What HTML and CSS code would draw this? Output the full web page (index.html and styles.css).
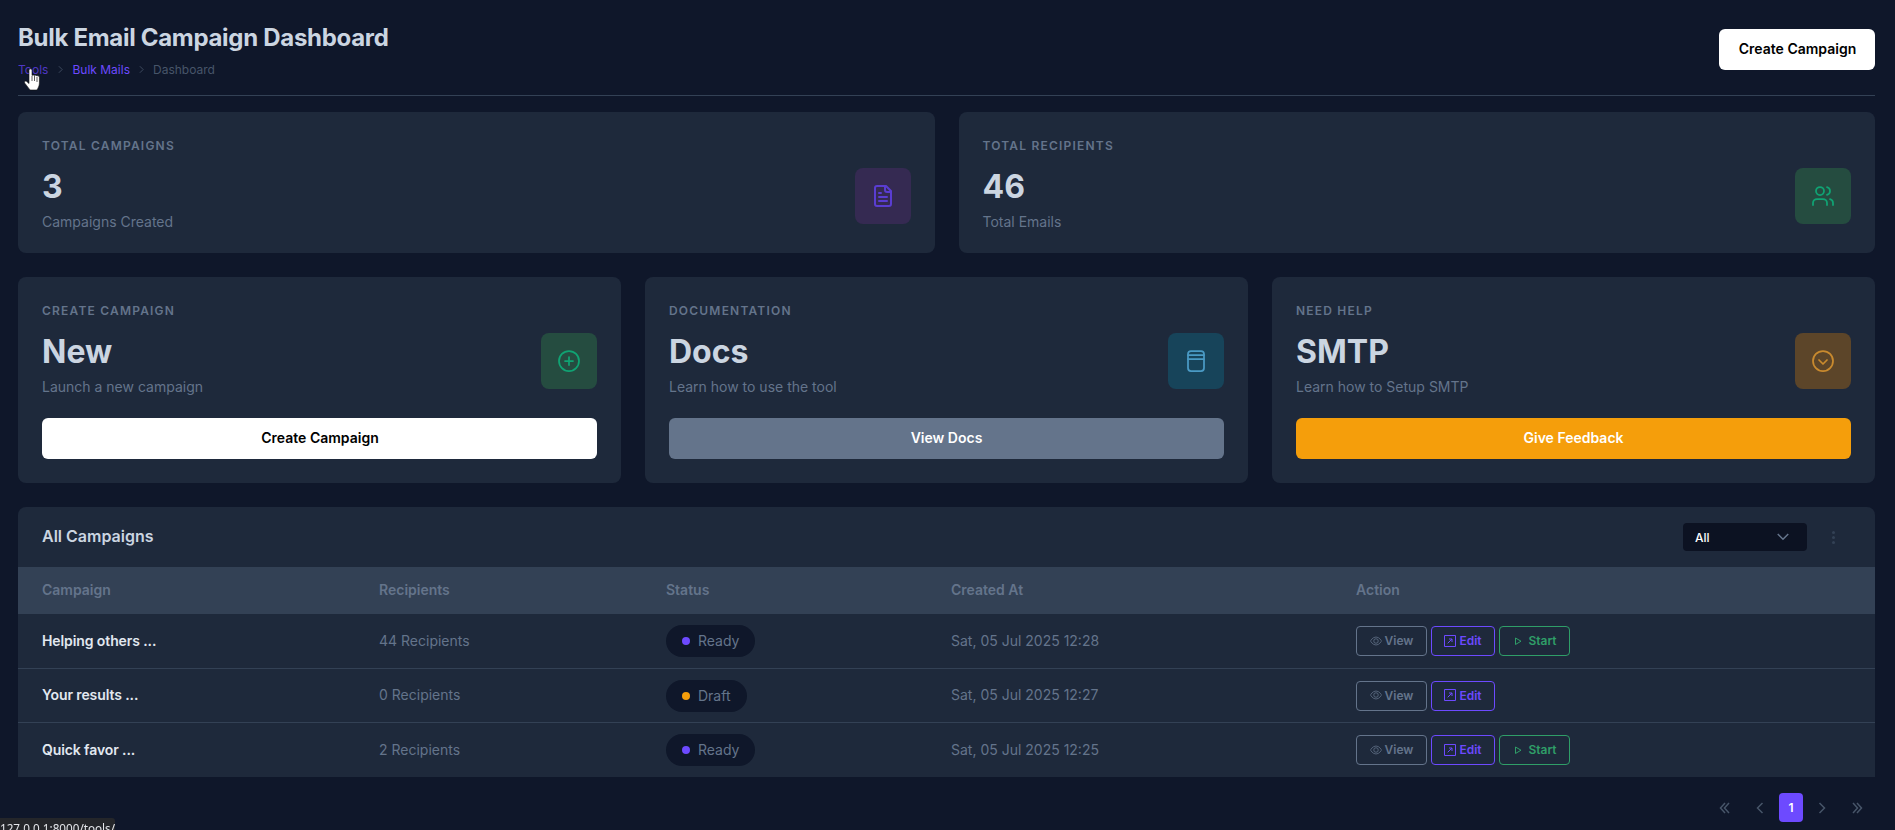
FILE: index.html
```html
<!DOCTYPE html>
<html lang="en">
<head>
<meta charset="utf-8">
<title>Bulk Email Campaign Dashboard</title>
<link rel="stylesheet" href="styles.css">
</head>
<body>
<main class="page">
  <header class="page-head">
    <div>
      <h1 class="page-title">Bulk Email Campaign Dashboard</h1>
      <nav class="crumbs">
        <a class="crumb-link crumb-hover">Tools</a>
        <svg class="crumb-sep" viewBox="0 0 24 24"><path d="m9 18 6-6-6-6"/></svg>
        <a class="crumb-link">Bulk Mails</a>
        <svg class="crumb-sep" viewBox="0 0 24 24"><path d="m9 18 6-6-6-6"/></svg>
        <span class="crumb-current">Dashboard</span>
      </nav>
    </div>
    <button class="btn btn-white btn-head">Create Campaign</button>
  </header>

  <section class="grid grid-2">
    <article class="card">
      <div class="card-row">
        <div class="card-text">
          <div class="card-label">TOTAL CAMPAIGNS</div>
          <div class="card-big">3</div>
          <div class="card-sub">Campaigns Created</div>
        </div>
        <div class="icon-box box-purple">
          <svg class="ico" viewBox="0 0 24 24"><path d="M15 2H6a2 2 0 0 0-2 2v16a2 2 0 0 0 2 2h12a2 2 0 0 0 2-2V7Z"/><path d="M14 2v4a2 2 0 0 0 2 2h4"/><path d="M10 9H8"/><path d="M16 13H8"/><path d="M16 17H8"/></svg>
        </div>
      </div>
    </article>
    <article class="card">
      <div class="card-row">
        <div class="card-text">
          <div class="card-label">TOTAL RECIPIENTS</div>
          <div class="card-big">46</div>
          <div class="card-sub">Total Emails</div>
        </div>
        <div class="icon-box box-green">
          <svg class="ico" viewBox="0 0 24 24"><path d="M16 21v-2a4 4 0 0 0-4-4H6a4 4 0 0 0-4 4v2"/><circle cx="9" cy="7" r="4"/><path d="M22 21v-2a4 4 0 0 0-3-3.87"/><path d="M16 3.13a4 4 0 0 1 0 7.75"/></svg>
        </div>
      </div>
    </article>
  </section>

  <section class="grid grid-3">
    <article class="card">
      <div class="card-row">
        <div class="card-text">
          <div class="card-label">CREATE CAMPAIGN</div>
          <div class="card-big">New</div>
          <div class="card-sub">Launch a new campaign</div>
        </div>
        <div class="icon-box box-green">
          <svg class="ico" viewBox="0 0 24 24"><circle cx="12" cy="12" r="10"/><path d="M8 12h8"/><path d="M12 8v8"/></svg>
        </div>
      </div>
      <button class="btn btn-white btn-wide btn-offset">Create Campaign</button>
    </article>
    <article class="card">
      <div class="card-row">
        <div class="card-text">
          <div class="card-label">DOCUMENTATION</div>
          <div class="card-big">Docs</div>
          <div class="card-sub">Learn how to use the tool</div>
        </div>
        <div class="icon-box box-blue">
          <svg class="ico" viewBox="0 0 24 24"><rect x="4" y="2" width="16" height="20" rx="3"/><path d="M4 6h16"/><path d="M4 10h16"/></svg>
        </div>
      </div>
      <button class="btn btn-slate btn-wide">View Docs</button>
    </article>
    <article class="card">
      <div class="card-row">
        <div class="card-text">
          <div class="card-label">NEED HELP</div>
          <div class="card-big">SMTP</div>
          <div class="card-sub">Learn how to Setup SMTP</div>
        </div>
        <div class="icon-box box-amber">
          <svg class="ico" viewBox="0 0 24 24"><circle cx="12" cy="12" r="10"/><path d="m8 11 4 4 4-4"/></svg>
        </div>
      </div>
      <button class="btn btn-amber btn-wide">Give Feedback</button>
    </article>
  </section>

  <section class="table-card">
    <div class="table-head">
      <h2 class="table-title">All Campaigns</h2>
      <div class="table-tools">
        <div class="select">
          <span>All</span>
          <svg class="select-chev" viewBox="0 0 24 24"><path d="m5 8 7 7 7-7"/></svg>
        </div>
        <div class="kebab"><i></i><i></i><i></i></div>
      </div>
    </div>
    <table class="tbl">
      <thead>
        <tr>
          <th class="col-a">Campaign</th>
          <th class="col-b">Recipients</th>
          <th class="col-c">Status</th>
          <th class="col-d">Created At</th>
          <th>Action</th>
        </tr>
      </thead>
      <tbody>
        <tr>
          <td class="name cell-text">Helping others ...</td>
          <td class="cell-text">44 Recipients</td>
          <td><span class="pill"><i class="dot dot-purple"></i>Ready</span></td>
          <td class="cell-text">Sat, 05 Jul 2025 12:28</td>
          <td><div class="actions">
            <a class="act act-view"><svg class="act-ico" viewBox="0 0 24 24"><path d="M1 12s4-8 11-8 11 8 11 8-4 8-11 8-11-8-11-8Z"/><circle cx="12" cy="12" r="4.500"/></svg>View</a>
            <a class="act act-edit"><svg class="act-ico-sq" viewBox="0 0 12 12"><path d="M.5.5h11v11H.5z"/><path d="M3.700 8.300 8 4M5 4h3v3"/></svg>Edit</a>
            <a class="act act-start"><svg class="act-ico-play" viewBox="0 0 12 12"><path d="M3.500 3v6.500L9 6.200Z"/></svg>Start</a>
          </div></td>
        </tr>
        <tr>
          <td class="name cell-text">Your results ...</td>
          <td class="cell-text">0 Recipients</td>
          <td><span class="pill"><i class="dot dot-amber"></i>Draft</span></td>
          <td class="cell-text">Sat, 05 Jul 2025 12:27</td>
          <td><div class="actions">
            <a class="act act-view"><svg class="act-ico" viewBox="0 0 24 24"><path d="M1 12s4-8 11-8 11 8 11 8-4 8-11 8-11-8-11-8Z"/><circle cx="12" cy="12" r="4.500"/></svg>View</a>
            <a class="act act-edit"><svg class="act-ico-sq" viewBox="0 0 12 12"><path d="M.5.5h11v11H.5z"/><path d="M3.700 8.300 8 4M5 4h3v3"/></svg>Edit</a>
          </div></td>
        </tr>
        <tr>
          <td class="name cell-text">Quick favor ...</td>
          <td class="cell-text">2 Recipients</td>
          <td><span class="pill"><i class="dot dot-purple"></i>Ready</span></td>
          <td class="cell-text">Sat, 05 Jul 2025 12:25</td>
          <td><div class="actions">
            <a class="act act-view"><svg class="act-ico" viewBox="0 0 24 24"><path d="M1 12s4-8 11-8 11 8 11 8-4 8-11 8-11-8-11-8Z"/><circle cx="12" cy="12" r="4.500"/></svg>View</a>
            <a class="act act-edit"><svg class="act-ico-sq" viewBox="0 0 12 12"><path d="M.5.5h11v11H.5z"/><path d="M3.700 8.300 8 4M5 4h3v3"/></svg>Edit</a>
            <a class="act act-start"><svg class="act-ico-play" viewBox="0 0 12 12"><path d="M3.500 3v6.500L9 6.200Z"/></svg>Start</a>
          </div></td>
        </tr>
      </tbody>
    </table>
  </section>

  <nav class="pager">
    <span class="pg pg-first"><svg viewBox="0 0 14 14"><path d="M7 2 2.500 7 7 12M11 2 6.500 7 11 12"/></svg></span>
    <span class="pg"><svg viewBox="0 0 14 14"><path d="M9.500 2 4.500 7l5 5"/></svg></span>
    <span class="pg pg-on">1</span>
    <span class="pg"><svg viewBox="0 0 14 14"><path d="m4.500 2 5 5-5 5"/></svg></span>
    <span class="pg pg-last"><svg viewBox="0 0 14 14"><path d="M3 2l4.500 5L3 12M7 2l4.500 5L7 12"/></svg></span>
  </nav>
</main>

<svg class="cursor" viewBox="0 0 16 22"><path class="cursor-fill" d="M5 2C5 .6 8 .6 8 2v5.500c.6-.7 2-.7 2.400.1.600-.6 2-.6 2.400.4.600-.4 2.200-.2 2.600 1V15c0 3-1.400 5-2.400 7H6c-1-1.500-3-4-5.200-6.800-1-1.200.4-2.800 1.800-1.800L5 15.500Z"/><path class="cursor-line" d="M8 8v5M10.500 8v5M13 9v5"/></svg>
<div class="status-bar">127.0.0.1:8000/tools/</div>
</body>
</html>
```
FILE: styles.css
```css
* { box-sizing: border-box; }
html, body { margin: 0; height: 100%; overflow: hidden; }
body {
  background: #0f172a;
  color: #cbd5e1;
  font-family: Inter, "Noto Sans", "Liberation Sans", sans-serif;
}
.page { padding: 0 20px 0 18px; }

.page-head {
  display: flex;
  justify-content: space-between;
  align-items: flex-start;
  padding: 23px 0 16px;
  border-bottom: 1px solid #334155;
  margin-bottom: 16px;
  height: 96px;
}
.page-title { margin: 0; font-size: 24px; line-height: 30px; font-weight: 700; letter-spacing: -0.3px; color: #cbd5e1; }
.crumbs { display: flex; align-items: center; margin-top: 7px; height: 18px; font-size: 12px; }
.crumb-link { color: #6d4aff; }
.crumb-hover { color: #4f37c4; margin-right: 1px; }
.crumb-current { color: #475569; }
.crumb-sep { width: 13px; height: 13px; margin: 0 5px; fill: none; stroke: #475569; stroke-width: 1.5; }

.btn {
  display: block;
  border: 0;
  border-radius: 6px;
  height: 41px;
  font: 600 14px/35px Inter, "Noto Sans", sans-serif;
  padding-bottom: 4px;
  text-align: center;
}
.btn-head { width: 156px; margin-top: 6px; padding-left: 7px; }
.btn-wide { width: 100%; margin-top: 24px; }
.btn-offset { padding-left: 7px; }
.btn-white { background: #fff; color: #000; }
.btn-slate { background: #64748b; color: #fff; }
.btn-amber { background: #f59e0b; color: #fff; }

.grid { display: grid; gap: 24px; margin-bottom: 24px; }
.grid-2 { grid-template-columns: 1fr 1fr; }
.grid-3 { grid-template-columns: 1fr 1fr 1fr; }

.card { background: #1e293b; border-radius: 8px; padding: 24px; }
.card-row { display: flex; justify-content: space-between; }
.card-label { font-size: 12px; line-height: 20px; font-weight: 600; letter-spacing: 1.2px; color: #64748b; }
.card-big { margin-top: 12px; font-size: 32px; line-height: 38px; font-weight: 700; color: #cbd5e1; }
.card-sub { margin-top: 8px; font-size: 14px; line-height: 15px; color: #64748b; }

.icon-box {
  width: 56px;
  height: 56px;
  border-radius: 8px;
  display: flex;
  align-items: center;
  justify-content: center;
  align-self: flex-end;
  margin-bottom: 5px;
}
.ico { width: 24px; height: 24px; fill: none; stroke: currentColor; stroke-width: 1.75; stroke-linecap: round; stroke-linejoin: round; }
.box-purple { background: #352a52; color: #5a3dd1; }
.box-purple .ico { stroke-width: 2; }
.box-green { background: #254c40; color: #10a373; }
.box-blue { background: #17445a; color: #4a9ac4; }
.box-amber { background: #5c4529; color: #c98a2e; }

.table-card { background: #1e293b; border-radius: 8px 8px 0 0; overflow: hidden; }
.table-head { display: flex; justify-content: space-between; align-items: center; height: 60px; padding: 0 24px; }
.table-title { margin: 0 0 2px; font-size: 16px; font-weight: 600; color: #cbd5e1; }
.table-tools { display: flex; align-items: center; }
.select {
  width: 124px;
  height: 28px;
  background: #0c1222;
  border-radius: 4px;
  display: flex;
  align-items: center;
  justify-content: space-between;
  padding: 0 12px;
  font-size: 12px;
  font-weight: 500;
  color: #fff;
}
.select-chev { width: 18px; height: 18px; margin-right: 3px; fill: none; stroke: #64748b; stroke-width: 2; }
.kebab { display: flex; flex-direction: column; gap: 2px; width: 3px; margin: 0 16px 0 25px; }
.kebab i { display: block; width: 3px; height: 3px; border-radius: 50%; background: #334155; }

.tbl { width: 100%; border-collapse: collapse; table-layout: fixed; font-size: 14px; }
.col-a { width: 337px; }
.col-b { width: 287px; }
.col-c { width: 285px; }
.col-d { width: 405px; }
.tbl th { height: 47px; padding: 0 24px 2px; background: #334155; text-align: left; font-weight: 600; color: #64748b; }
.tbl td { height: 54.5px; padding: 0 24px; color: #64748b; border-top: 1px solid #334155; }
.tbl tbody tr:first-child td { border-top: 0; }
.tbl tbody tr:nth-child(2) td { height: 54px; }
.tbl td.cell-text { padding-bottom: 2px; }
.tbl td.name { font-weight: 600; letter-spacing: -0.1px; color: #e2e8f0; }

.pill {
  display: inline-flex;
  align-items: center;
  height: 32px;
  padding: 0 16px 1px;
  border-radius: 16px;
  background: #0f172a;
  color: #64748b;
}
.dot { width: 8px; height: 8px; border-radius: 50%; margin-right: 8px; margin-top: 1px; }
.dot-purple { background: #6d4aff; }
.dot-amber { background: #f59e0b; }

.actions { display: flex; gap: 4px; }
.act {
  display: inline-flex;
  align-items: center;
  justify-content: center;
  height: 30px;
  padding-bottom: 1px;
  border: 1px solid;
  border-radius: 4px;
  font-size: 12px;
  font-weight: 600;
}
.act-view { width: 71px; color: #64748b; border-color: #64748b; }
.act-edit { width: 64px; color: #6d4aff; border-color: #6d4aff; }
.act-start { width: 71px; color: #2f9e68; border-color: #2f9e68; }
.act-ico { width: 12px; height: 12px; margin-right: 3px; fill: none; stroke: currentColor; stroke-width: 1.5; }
.act-ico-sq { width: 12px; height: 12px; margin-right: 3px; fill: none; stroke: currentColor; stroke-width: 1; }
.act-ico-play { width: 12px; height: 12px; margin-right: 4px; fill: none; stroke: currentColor; stroke-width: 1; }

.pager { display: flex; justify-content: flex-end; align-items: center; gap: 7px; margin-top: 16px; height: 29px; padding-right: 6px; }
.pg { width: 24px; height: 29px; display: flex; align-items: center; justify-content: center; border-radius: 4px; font-size: 12px; font-weight: 600; color: #fff; }
.pg svg { width: 14px; height: 14px; fill: none; stroke: #475569; stroke-width: 1.5; }
.pg-first { margin-right: 4px; }
.pg-last { margin-left: 4px; }
.pg-on { background: #6d4aff; }

.cursor { position: fixed; left: 24px; top: 68px; width: 16px; height: 22px; overflow: visible; }
.cursor-fill { fill: #fff; stroke: #111; stroke-width: .6; }
.cursor-line { fill: none; stroke: #333; stroke-width: .8; }

.status-bar {
  position: fixed;
  left: 0;
  bottom: 0;
  height: 12px;
  width: 115px;
  overflow: hidden;
  padding-top: 2px;
  background: #24262a;
  border-top-right-radius: 3px;
  color: #e4e6ea;
  font: 11.7px/16px "Noto Sans", sans-serif;
  white-space: nowrap;
}
```
